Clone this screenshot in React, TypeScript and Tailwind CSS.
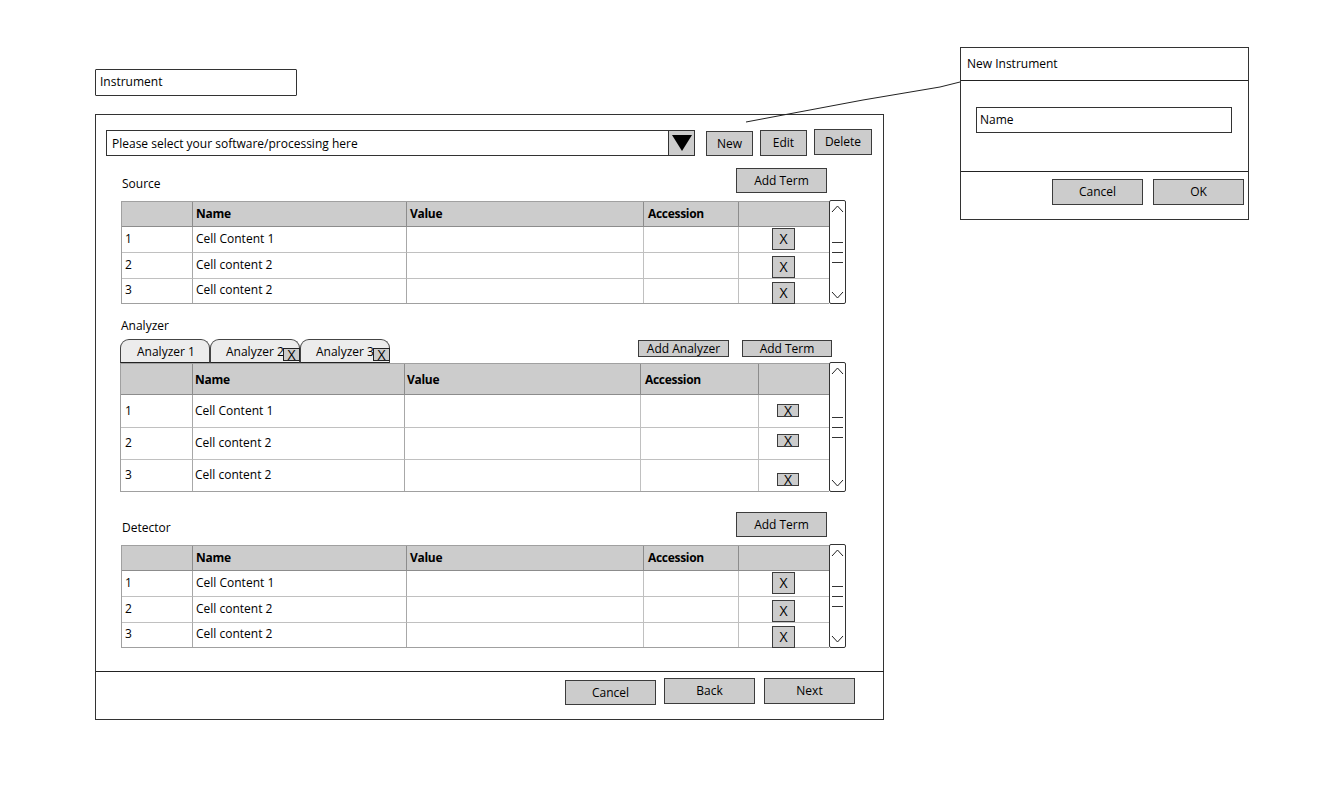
import React from "react";

const font = "font-['Open_Sans',sans-serif] text-[12px] text-black";

function Btn({ label, className = "" }: { label: string; className?: string }) {
  return (
    <div className={`flex items-center justify-center bg-[#cccccc] border border-[#3c3c3c] box-border ${className}`}>
      {label}
    </div>
  );
}

function ScrollBar({ lines }: { lines: string }) {
  return (
    <div className="w-[17px] -mt-[1px] border border-[#333] rounded-[2px] bg-white box-border flex flex-col justify-between items-center py-[3px] relative">
      <svg width="13" height="9" viewBox="0 0 13 9" fill="none" stroke="#222" strokeWidth="1"><path d="M1 8 L6.5 2 L12 8" /></svg>
      <div className={`flex flex-col items-center ${lines}`}>
        <div className="w-[11px] h-[1px] bg-[#333]" />
        <div className="w-[11px] h-[1px] bg-[#333]" />
        <div className="w-[11px] h-[1px] bg-[#333]" />
      </div>
      <svg width="13" height="9" viewBox="0 0 13 9" fill="none" stroke="#222" strokeWidth="1"><path d="M1 1 L6.5 7 L12 1" /></svg>
    </div>
  );
}

type TableProps = {
  grid: string;
  headH: string;
  headExtra?: string;
  rowH: string[];
  rowPad?: string[];
  xCell: string[];
  xBtn: string;
  firstPad: string;
  namePad: string;
  valuePad: string;
  accPad: string;
  lines: string;
  width: string;
};

const rows = [
  ["1", "Cell Content 1"],
  ["2", "Cell content 2"],
  ["3", "Cell content 2"],
];

function DataTable(p: TableProps) {
  const head = `bg-[#cccccc] ${p.headH} ${p.headExtra ?? ""} border-b border-[#8c8c8c] flex items-center font-bold tracking-[-0.3px]`;
  return (
    <div className="flex">
      <div className={`grid ${p.grid} ${p.width} border border-[#a0a0a0] border-r-0 box-border`}>
        <div className={`${head} border-r`} />
        <div className={`${head} border-r ${p.namePad}`}>Name</div>
        <div className={`${head} border-r ${p.valuePad}`}>Value</div>
        <div className={`${head} border-r ${p.accPad}`}>Accession</div>
        <div className={head} />
        {rows.map((r, i) => {
          const line = i < 2 ? "border-b border-b-[#c0c0c0]" : "";
          const pad = p.rowPad ? p.rowPad[i] : "";
          return (
            <React.Fragment key={r[0]}>
              <div className={`${p.rowH[i]} ${pad} border-r border-r-[#a8a8a8] ${line} flex items-center ${p.firstPad}`}>{r[0]}</div>
              <div className={`${p.rowH[i]} ${pad} border-r border-r-[#a8a8a8] ${line} flex items-center ${p.namePad}`}>{r[1]}</div>
              <div className={`${p.rowH[i]} border-r border-r-[#c0c0c0] ${line}`} />
              <div className={`${p.rowH[i]} border-r border-r-[#c0c0c0] ${line}`} />
              <div className={`${p.rowH[i]} ${line} ${p.xCell[i]}`}>
                <div className={`bg-[#cccccc] border border-[#3c3c3c] box-border flex items-center justify-center text-[14px] leading-none ${p.xBtn}`}>X</div>
              </div>
            </React.Fragment>
          );
        })}
      </div>
      <ScrollBar lines={p.lines} />
    </div>
  );
}

function Tab({ label, close, className = "" }: { label: string; close?: boolean; className?: string }) {
  return (
    <div className={`relative w-[90px] h-[24px] bg-[#ececec] border border-[#444] border-b-[#222] rounded-t-[9px] box-border flex items-center pt-[2px] ${className}`}>
      {label}
      {close && (
        <div className="absolute -right-[1px] bottom-[1px] w-[17px] h-[13px] bg-[#cccccc] border border-[#222] box-border flex items-center justify-center text-[14px] leading-none">X</div>
      )}
    </div>
  );
}

const smallTable = {
  grid: "grid-cols-[71px_214px_237px_95px_90px]",
  width: "w-[708px]",
  headH: "h-[25px]",
  rowH: ["h-[26px]", "h-[26px]", "h-[24px]"],
  rowPad: ["pb-[2px]", "pb-[2px]", "pb-[2px]"],
  xCell: ["pl-[33px] pt-[1px]", "pl-[33px] pt-[3px]", "pl-[33px] pt-[3px]"],
  xBtn: "w-[23px] h-[22px]",
  firstPad: "pl-[3px]",
  namePad: "pl-[3px]",
  valuePad: "pl-[3px]",
  accPad: "pl-[4px]",
  lines: "gap-[9px]",
};

export default function App() {
  return (
    <div className={`relative w-[1324px] h-[805px] bg-white flex overflow-hidden ${font}`}>
      {/* Main column */}
      <div className="ml-[95px] mt-[69px] w-[789px] shrink-0">
        <div className="w-[202px] h-[27px] border border-[#333] rounded-[1px] box-border flex items-center pl-[4px] pb-[1px]">Instrument</div>

        <div className="mt-[18px] h-[606px] border border-[#333] box-border flex flex-col">
          {/* selector row */}
          <div className="mt-[14px] ml-[10px] flex items-start h-[27px]">
            <div className="mt-[1px] w-[589px] h-[26px] border border-[#333] box-border flex">
              <div className="flex-1 flex items-center pl-[5px] pt-[2px]">Please select your software/processing here</div>
              <div className="w-[26px] bg-[#cccccc] border-l border-[#333] flex items-center justify-center">
                <svg width="20" height="16" viewBox="0 0 20 16"><path d="M0 0 L20 0 L10 16 Z" fill="#000" /></svg>
              </div>
            </div>
            <Btn label="New" className="ml-[11px] mt-[2px] w-[47px] h-[25px]" />
            <Btn label="Edit" className="ml-[7px] mt-[1px] w-[47px] h-[26px]" />
            <Btn label="Delete" className="ml-[7px] w-[58px] h-[26px]" />
          </div>

          {/* Source */}
          <div className="mt-[12px] ml-[25px] w-[706px] h-[25px] flex justify-between">
            <div className="mt-[7px] pl-[1px]">Source</div>
            <Btn label="Add Term" className="w-[91px] h-[25px]" />
          </div>
          <div className="mt-[8px] ml-[25px]">
            <DataTable {...smallTable} />
          </div>

          {/* Analyzer */}
          <div className="mt-[15px] ml-[25px] leading-[14px]">Analyzer</div>
          <div className="mt-[6px] ml-[24px] w-[712px] h-[24px] flex">
            <Tab label="Analyzer 1" className="pl-[16px]" />
            <Tab label="Analyzer 2" close className="pl-[15px]" />
            <Tab label="Analyzer 3" close className="pl-[15px]" />
            <Btn label="Add Analyzer" className="ml-[248px] mt-[1px] w-[91px] h-[17px]" />
            <Btn label="Add Term" className="ml-[13px] mt-[1px] w-[90px] h-[17px]" />
          </div>
          <div className="ml-[24px]">
            <DataTable
              grid="grid-cols-[72px_212px_236px_118px_70px]"
              width="w-[709px]"
              headH="h-[31px]"
              headExtra="pt-[2px]"
              rowH={["h-[33px]", "h-[32px]", "h-[31px]"]}
              rowPad={["", "pb-[2px]", "pb-[2px]"]}
              xCell={["pl-[18px] pt-[9px]", "pl-[18px] pt-[6px]", "pl-[18px] pt-[13px]"]}
              xBtn="w-[22px] h-[13px]"
              firstPad="pl-[4px]"
              namePad="pl-[2px]"
              valuePad="pl-[2px]"
              accPad="pl-[4px]"
              lines="gap-[9px]"
            />
          </div>

          {/* Detector */}
          <div className="mt-[20px] ml-[25px] w-[706px] h-[25px] flex justify-between">
            <div className="mt-[7px] pl-[1px]">Detector</div>
            <Btn label="Add Term" className="w-[91px] h-[25px]" />
          </div>
          <div className="mt-[8px] ml-[25px]">
            <DataTable {...smallTable} />
          </div>

          {/* Footer */}
          <div className="mt-auto h-[48px] border-t border-[#222] -mr-[1px] flex items-start pl-[469px]">
            <Btn label="Cancel" className="mt-[8px] w-[91px] h-[25px]" />
            <Btn label="Back" className="ml-[8px] mt-[6px] w-[91px] h-[26px]" />
            <Btn label="Next" className="ml-[9px] mt-[6px] w-[91px] h-[26px]" />
          </div>
        </div>
      </div>

      {/* Dialog */}
      <div className="ml-[76px] mt-[47px] w-[289px] h-[173px] border border-[#333] box-border shrink-0 flex flex-col">
        <div className="h-[33px] border-b border-[#222] flex items-center pl-[6px]">New Instrument</div>
        <div className="h-[91px] border-b border-[#222] pt-[26px] pl-[15px]">
          <div className="w-[256px] h-[26px] border border-[#333] box-border flex items-center pl-[3px] pb-[1px]">Name</div>
        </div>
        <div className="flex justify-end gap-[10px] pr-[4px] pt-[7px]">
          <Btn label="Cancel" className="w-[91px] h-[26px]" />
          <Btn label="OK" className="w-[91px] h-[26px]" />
        </div>
      </div>

      {/* Connector */}
      <svg className="absolute left-[740px] top-[75px] pointer-events-none" width="225" height="50" viewBox="0 0 225 50" fill="none">
        <path d="M6 47 L123 25 L200 12 L220 7" stroke="#222" strokeWidth="1" />
      </svg>
    </div>
  );
}
